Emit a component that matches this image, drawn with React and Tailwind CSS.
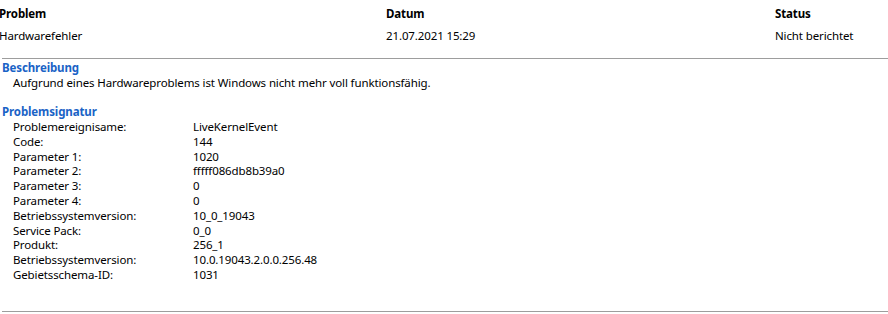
export default function App() {
  const signatur = [
    ['Problemereignisame:', 'LiveKernelEvent'],
    ['Code:', '144'],
    ['Parameter 1:', '1020'],
    ['Parameter 2:', 'fffff086db8b39a0'],
    ['Parameter 3:', '0'],
    ['Parameter 4:', '0'],
    ['Betriebssystemversion:', '10_0_19043'],
    ['Service Pack:', '0_0'],
    ['Produkt:', '256_1'],
    ['Betriebssystemversion:', '10.0.19043.2.0.0.256.48'],
    ['Gebietsschema-ID:', '1031'],
  ]

  return (
    <div
      className="w-[888px] h-[314px] bg-white text-[11.5px] tracking-[-0.12px] text-black overflow-hidden"
      style={{ fontFamily: '"Noto Sans", "Open Sans", sans-serif' }}
    >
      {/* Kopfzeile */}
      <div className="h-[58px] pt-[6px]">
        <div className="grid grid-cols-[387px_389px_1fr] leading-[16px] -ml-[1px]">
          <div className="font-bold">Problem</div>
          <div className="font-bold">Datum</div>
          <div className="font-bold">Status</div>
        </div>
        <div className="grid grid-cols-[387px_389px_1fr] leading-[16px] mt-[6px] -ml-[1px]">
          <div>Hardwarefehler</div>
          <div>21.07.2021 15:29</div>
          <div>Nicht berichtet</div>
        </div>
      </div>

      <div className="border-b border-[#9d9d9d] pb-[28px] border-t ml-[2px]">
        <div className="-ml-[2px] pt-[1px]">
          {/* Beschreibung */}
          <div className="pl-[2px] leading-[15px] font-bold text-[#1a63c6]">Beschreibung</div>
          <div className="pl-[13px] leading-[15px]">
            Aufgrund eines Hardwareproblems ist Windows nicht mehr voll funktionsfähig.
          </div>

          {/* Problemsignatur */}
          <div className="pl-[2px] mt-[14px] leading-[15px] font-bold text-[#1a63c6]">Problemsignatur</div>
          <div className="pl-[13px] pt-[1px]">
            {signatur.map(([label, value], i) => (
              <div key={i} className="grid grid-cols-[180px_1fr] leading-[14.8px]">
                <div>{label}</div>
                <div>{value}</div>
              </div>
            ))}
          </div>
        </div>
      </div>
    </div>
  )
}
